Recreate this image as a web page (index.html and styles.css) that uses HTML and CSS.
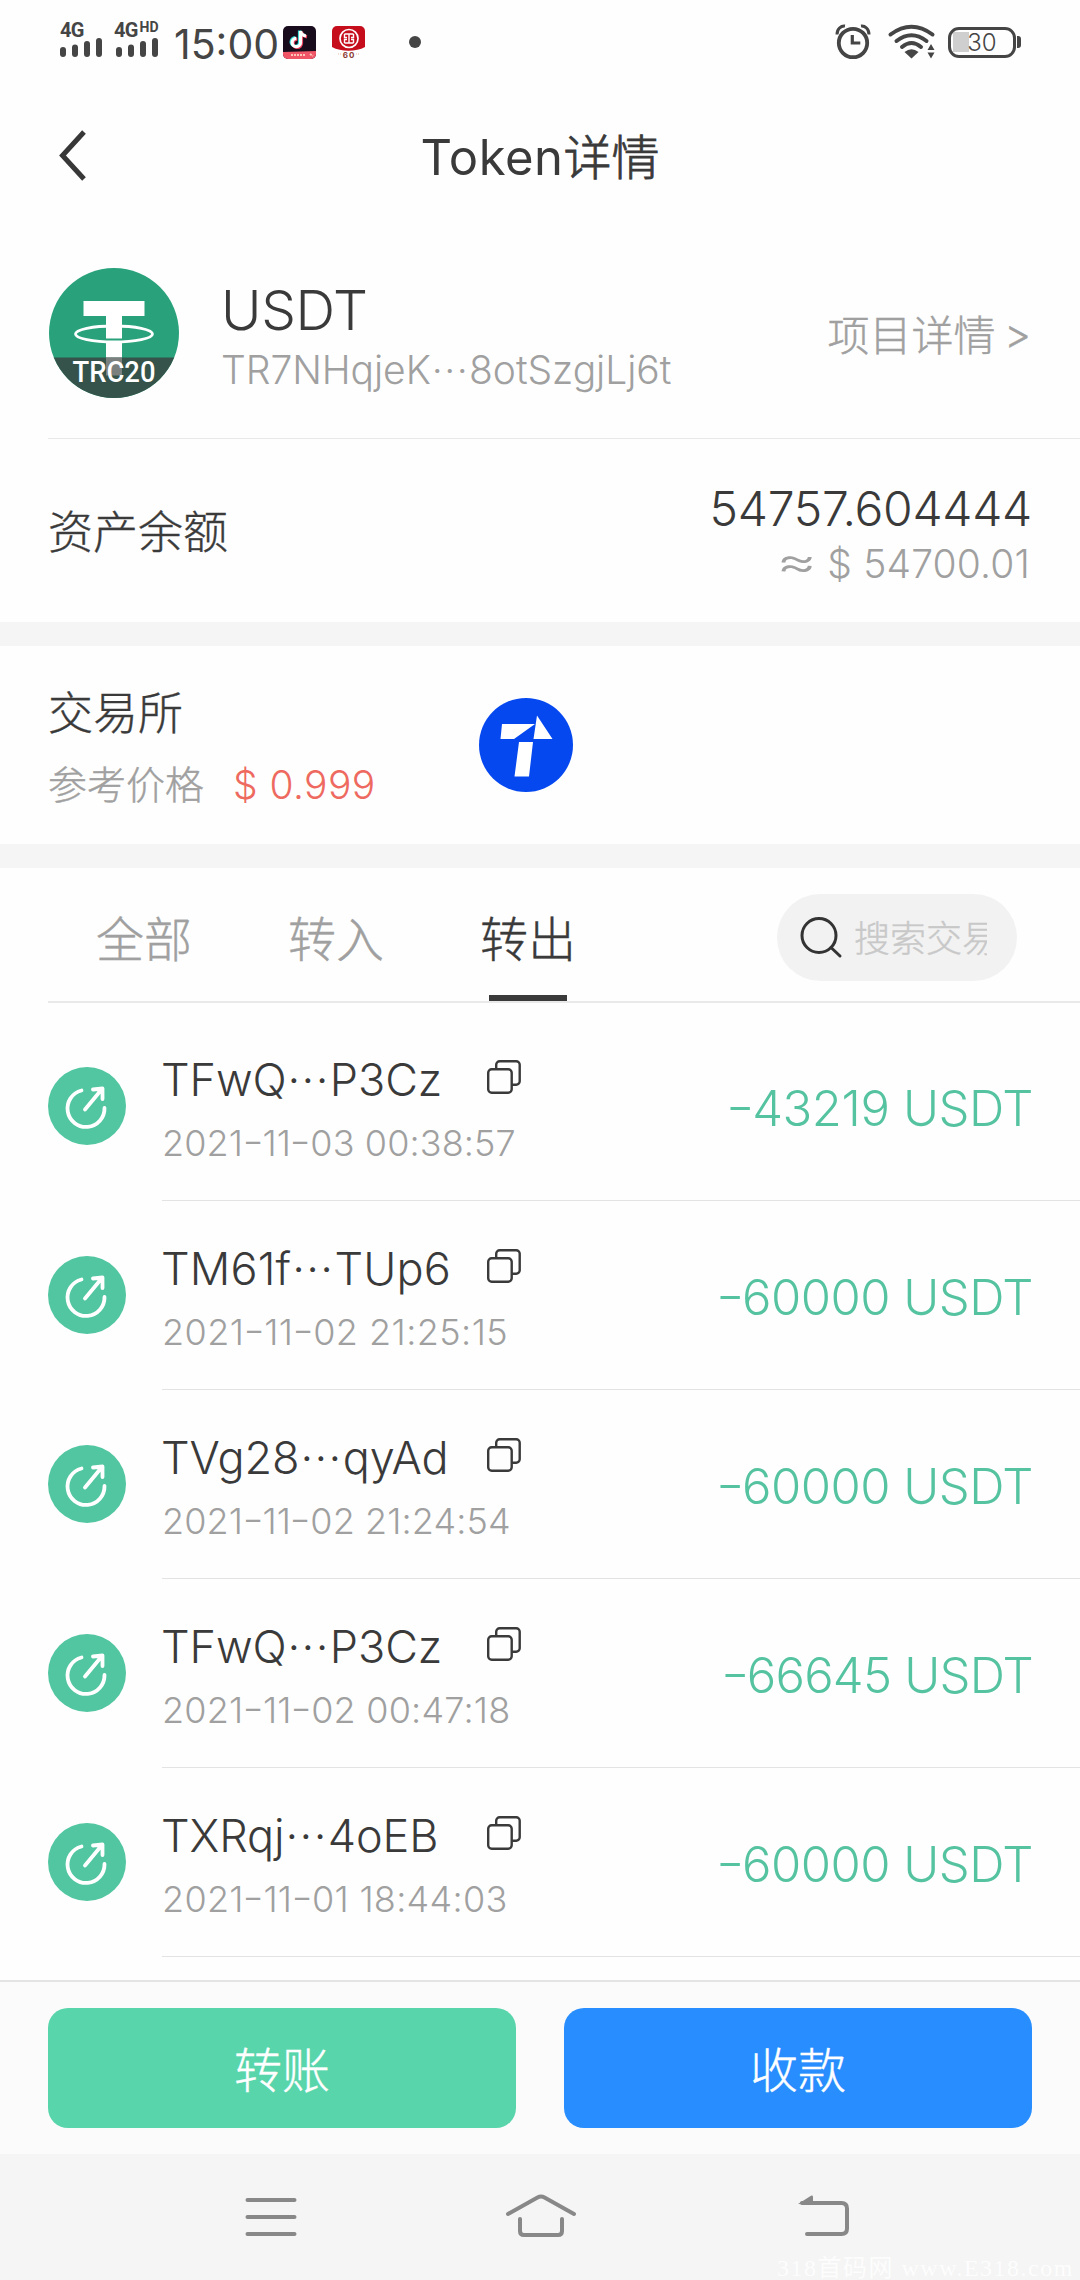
FILE: index.html
```
<!DOCTYPE html>
<html lang="zh-CN">
<head>
<meta charset="utf-8">
<title>Token详情</title>
<link rel="stylesheet" href="styles.css">
</head>
<body>
<svg class="defs" width="0" height="0" aria-hidden="true">
  <symbol id="out" viewBox="0 0 78 78">
    <circle cx="39" cy="39" r="39" fill="#51c6a0"/>
    <g fill="none" stroke="#fff" stroke-width="3.8" stroke-linecap="round" stroke-linejoin="round">
      <path d="M33.500 23.500A18.500 18.500 0 1 0 56.500 41"/>
      <path d="M37 42.500L54 22M45 22.500l9.500-1v10.500"/>
    </g>
  </symbol>
  <symbol id="copy" viewBox="0 0 36 36">
    <g fill="none" stroke="#3a3a3a" stroke-width="2.400">
      <rect x="2.200" y="10.200" width="23.500" height="23.500" rx="3.500"/>
      <path d="M10.200 10V5.700a3.500 3.500 0 0 1 3.500-3.500h16.500a3.500 3.500 0 0 1 3.500 3.500v16.500a3.500 3.500 0 0 1-3.500 3.500h-4.200"/>
    </g>
  </symbol>
</svg>
<div class="screen">
  <header class="status">
    <div class="signal">
      <span class="net">4G</span>
      <svg width="44" height="20" viewBox="0 0 44 20"><path d="M3 12v4M15 9.500v6.500M27 6v10M39 3v13" stroke="#454545" stroke-width="6" stroke-linecap="round"/></svg>
    </div>
    <div class="signal second">
      <span class="net">4G<sup>HD</sup></span>
      <svg width="44" height="20" viewBox="0 0 44 20"><path d="M3 12v4M15 9.500v6.500M27 6v10M39 3v13" stroke="#454545" stroke-width="6" stroke-linecap="round"/></svg>
    </div>
    <span class="clock">15:00</span>
    <svg class="app" width="33" height="33" viewBox="0 0 33 33">
      <rect width="33" height="33" rx="5" fill="#170b1c"/>
      <path d="M0 26l33-1v3a5 5 0 0 1-5 5H5a5 5 0 0 1-5-5z" fill="#ef5467"/>
      <path d="M8 29h15M27 28l3 2" stroke="#ffc6b8" stroke-width="2" stroke-dasharray="2 1"/>
      <g fill="none" stroke-width="3.200">
        <path d="M17.500 5v11.500a4.200 4.200 0 1 1-4.200-4.200M17.500 5c.5 3 2.500 4.500 5.500 5" stroke="#2fd6d6" transform="translate(-1 -.6)"/>
        <path d="M17.500 5v11.500a4.200 4.200 0 1 1-4.200-4.200M17.500 5c.5 3 2.500 4.500 5.500 5" stroke="#f0405f" transform="translate(1 .8)"/>
        <path d="M17.500 5v11.500a4.200 4.200 0 1 1-4.200-4.200M17.500 5c.5 3 2.500 4.500 5.500 5" stroke="#fff"/>
      </g>
    </svg>
    <svg class="app bank" width="33" height="33" viewBox="0 0 33 33">
      <path d="M5 0h23a5 5 0 0 1 5 5v16c-9 5-24 5-33 0V5a5 5 0 0 1 5-5z" fill="#c50d1c"/>
      <circle cx="17" cy="12.500" r="9" fill="none" stroke="#fff" stroke-width="1.700"/>
      <path d="M12.500 8H21.500M12.500 17H21.500M17 8v9M12.500 8v3.500H15M21.500 8v3.500H19M12.500 17v-3.500H15M21.500 17v-3.500H19" fill="none" stroke="#fff" stroke-width="1.400"/>
      <text x="17" y="31.500" text-anchor="middle" class="tiny">60</text>
      <path d="M6 28h4M24 28h4" stroke="#e8b9a0" stroke-width="1" stroke-dasharray="1 1"/>
    </svg>
    <i class="dot"></i>
    <div class="right">
      <svg width="36" height="36" viewBox="0 0 36 36">
        <circle cx="17" cy="19" r="14.200" fill="none" stroke="#454545" stroke-width="3.800"/>
        <path d="M16.300 11v8h8" fill="none" stroke="#454545" stroke-width="3.200"/>
        <path d="M1 10.500C1 5 5 1.500 9 2M33 10.500C33 5 29 1.500 25 2" fill="none" stroke="#454545" stroke-width="3"/>
      </svg>
      <svg width="48" height="36" viewBox="0 0 48 36">
        <g fill="none" stroke="#454545" stroke-width="4" stroke-linecap="round"><path d="M2.500 10.500Q23.500-5 44.500 10.500"/><path d="M8.500 17Q23.500 5.500 38.500 17"/><path d="M14 23Q23.500 15 33 23"/></g>
        <path d="M16.500 28Q23.500 22.500 30.500 28L23.500 34.500z" fill="#454545"/>
        <path d="M39.500 26l3.500-6 3.500 6zM39.500 28.500l3.500 6 3.500-6z" fill="#454545"/>
      </svg>
      <div class="battery"><span>30</span></div>
    </div>
  </header>

  <nav class="titlebar">
    <svg width="34" height="54" viewBox="0 0 34 54"><path d="M30 3L8.500 26.500L30 50" fill="none" stroke="#383838" stroke-width="5"/></svg>
    <h1>Token<span>详情</span></h1>
  </nav>

  <section class="token">
    <svg class="coin" width="132" height="132" viewBox="0 0 132 132">
      <clipPath id="round"><circle cx="66" cy="66" r="65"/></clipPath>
      <g clip-path="url(#round)">
        <rect width="132" height="132" fill="#29a27b"/>
        <path d="M35.500 34H96.500V49H74V109H58V49H35.500z" fill="#fff"/>
        <path d="M58 71.500h16v4H58z" fill="#29a27b"/>
        <ellipse cx="66" cy="67" rx="38.500" ry="8" fill="none" stroke="#fff" stroke-width="2.800"/>
        <path d="M58 57h16v14H58z" fill="#fff"/>
        <rect y="90.500" width="132" height="42" fill="#35534a"/>
        <path d="M58 90.500h16v18H58z" fill="#7b817f"/>
      </g>
      <text x="66" y="115" text-anchor="middle" textLength="83" lengthAdjust="spacingAndGlyphs" class="chain">TRC20</text>
    </svg>
    <div class="names">
      <div class="symbol">USDT</div>
      <div class="addr">TR7NHqjeK<b>···</b>8otSzgjLj6t</div>
    </div>
    <div class="detail">项目详情 <span>&gt;</span></div>
  </section>

  <section class="balance">
    <div class="label">资产余额</div>
    <div class="values">
      <div class="amount">54757.604444</div>
      <div class="fiat"><i>≈</i> $ 54700.01</div>
    </div>
  </section>

  <section class="exchange">
    <div class="price">
      <div class="label">交易所</div>
      <div class="ref"><span>参考价格</span><em>$ 0.999</em></div>
    </div>
    <svg width="94" height="94" viewBox="0 0 94 94">
      <circle cx="47" cy="47" r="47" fill="#0548f0"/>
      <path d="M23 26H56L35 41H21.500zM58 17.500L73.500 41H54.500zM40 44H54L50 78.500H35.500z" fill="#fff"/>
    </svg>
  </section>

  <section class="tabs">
    <div class="tab">全部</div>
    <div class="tab">转入</div>
    <div class="tab active">转出</div>
    <div class="search">
      <svg width="42" height="42" viewBox="0 0 42 42"><g fill="none" stroke="#333" stroke-width="3" stroke-linecap="round"><circle cx="18" cy="18.500" r="17"/><path d="M30 30.500l9 8.500"/></g></svg>
      <span>搜索交易</span>
    </div>
  </section>

  <main class="list">
    <article class="row r1"><svg class="ic"><use href="#out"/></svg><div class="body"><div class="who"><span class="hash">TFwQ<b>···</b>P3Cz</span><svg class="cp"><use href="#copy"/></svg><time>2021<i>-</i>11<i>-</i>03 00:38:57</time></div><div class="sum"><i>-</i>43219 USDT</div></div></article>
    <article class="row r2"><svg class="ic"><use href="#out"/></svg><div class="body"><div class="who"><span class="hash">TM61f<b>···</b>TUp6</span><svg class="cp"><use href="#copy"/></svg><time>2021<i>-</i>11<i>-</i>02 21:25:15</time></div><div class="sum"><i>-</i>60000 USDT</div></div></article>
    <article class="row r3"><svg class="ic"><use href="#out"/></svg><div class="body"><div class="who"><span class="hash">TVg28<b>···</b>qyAd</span><svg class="cp"><use href="#copy"/></svg><time>2021<i>-</i>11<i>-</i>02 21:24:54</time></div><div class="sum"><i>-</i>60000 USDT</div></div></article>
    <article class="row r4"><svg class="ic"><use href="#out"/></svg><div class="body"><div class="who"><span class="hash">TFwQ<b>···</b>P3Cz</span><svg class="cp"><use href="#copy"/></svg><time>2021<i>-</i>11<i>-</i>02 00:47:18</time></div><div class="sum"><i>-</i>66645 USDT</div></div></article>
    <article class="row r5"><svg class="ic"><use href="#out"/></svg><div class="body"><div class="who"><span class="hash">TXRqj<b>···</b>4oEB</span><svg class="cp"><use href="#copy"/></svg><time>2021<i>-</i>11<i>-</i>01 18:44:03</time></div><div class="sum"><i>-</i>60000 USDT</div></div></article>
  </main>

  <footer class="actions">
    <button class="send">转账</button>
    <button class="receive">收款</button>
  </footer>

  <div class="sysnav">
    <svg width="50" height="44" viewBox="0 0 50 44"><path d="M1.500 5h47M1.500 22h47M1.500 39h47" stroke="#888" stroke-width="4" stroke-linecap="round"/></svg>
    <svg width="72" height="44" viewBox="0 0 72 44"><g fill="none" stroke="#888" stroke-width="4" stroke-linecap="round" stroke-linejoin="round"><path d="M3 19L32.500 2.500Q36 .5 39.500 2.500L69 19"/><path d="M15 24V36Q15 40 19 40H53Q57 40 57 36V24"/></g></svg>
    <svg width="52" height="44" viewBox="0 0 52 44"><path d="M9 39H43.500Q49 39 49 33.500V13.500Q49 8 43.500 8H4" fill="none" stroke="#888" stroke-width="4" stroke-linecap="round"/><path d="M0 9L13 .7Q15 0 15 2V9.500z" fill="#888"/></svg>
    <div class="mark">318首码网 www.E318.com</div>
  </div>
</div>
</body>
</html>
```
FILE: styles.css
```
* { box-sizing: border-box; }
body { margin: 0; background: #fefefe; }
.defs { display: block; height: 0; }
.screen {
  width: 1080px; height: 2280px; overflow: hidden;
  display: flex; flex-direction: column;
  font-family: Inter, "Noto Sans CJK SC", sans-serif;
  font-weight: 300; color: #3a3a3a; background: #fefefe;
}
svg { display: block; flex: none; overflow: visible; }
h1, em, b, i, time { font-style: normal; font-weight: inherit; margin: 0; }

.status { height: 90px; flex: none; display: flex; padding: 0 64px 0 60px; color: #454545; }
.signal { width: 44px; padding-top: 20px; }
.signal.second { margin-left: 12px; }
.net { display: block; height: 18px; font: 700 20px/20px Roboto, sans-serif; letter-spacing: -.8px; white-space: nowrap; }
.second .net { margin-left: -2px; }
.net sup { font-size: 14px; line-height: 1; vertical-align: 5px; letter-spacing: 0; margin-left: 2px; }
.clock { width: 104px; flex: none; margin-left: 14px; height: 88px; font-size: 41px; line-height: 89px; font-weight: 370; letter-spacing: 0; white-space: nowrap; }
.app { margin: 26px 0 0 5px; }
.app.bank { margin-left: 16px; }
.dot { width: 12px; height: 12px; border-radius: 50%; background: #454545; margin: 36px 0 0 44px; }
.tiny { font: 700 8px Inter, sans-serif; fill: #8c3a33; letter-spacing: 1px; }
.right { margin-left: auto; display: flex; gap: 16px; padding-top: 24px; }
.battery { position: relative; width: 68px; height: 31px; margin: 3px 0 0 -4px; border: 3.5px solid #454545; border-radius: 11px; background: linear-gradient(#cfcfcf, #cfcfcf) 2px 2px / 16px 20px no-repeat; font-size: 24px; line-height: 25px; text-align: center; font-weight: 350; }
.battery::after { content: ""; position: absolute; right: -8px; top: 6px; width: 4px; height: 12px; border-radius: 0 3px 3px 0; background: #454545; }

.titlebar { height: 136px; flex: none; display: grid; grid-template-columns: 1fr auto 1fr; padding: 0 51px; }
.titlebar svg { margin: 39px 0 0 3px; }
.titlebar h1 { font-size: 49px; line-height: 60px; height: 60px; margin-top: 38px; font-weight: 380; letter-spacing: .5px; white-space: nowrap; }
.titlebar h1 span { font-size: 48px; font-weight: 300; letter-spacing: 0; -webkit-text-stroke: .8px currentColor; }

.token { height: 213px; flex: none; margin-left: 48px; padding: 41px 49px 0 0; border-bottom: 1px solid #e8e8e8; display: flex; }
.chain { font: 500 30px Roboto, sans-serif; fill: #fff; }
.names { margin-left: 40px; white-space: nowrap; }
.symbol { font-size: 55px; line-height: 60px; height: 60px; margin: 13px 0 0 1px; letter-spacing: -.3px; }
.addr { font-size: 39px; line-height: 50px; height: 50px; margin: 5px 0 0 1px; color: #a0a0a0; letter-spacing: -.05px; }
.detail { margin: 38px 0 0 auto; height: 60px; line-height: 62px; font-size: 42px; color: #a0a0a0; white-space: nowrap; }
.detail span { font-size: 41px; margin-left: -3px; display: inline-block; line-height: 40px; transform: translateY(-2px); }
.addr b, .hash b { letter-spacing: 1.4px; margin-left: 1px; }

.label, .tab, .detail, .ref span, .search span, .actions button { -webkit-text-stroke: .4px currentColor; }

.balance { height: 183px; flex: none; display: flex; justify-content: space-between; padding: 0 48px; }
.label { font-size: 45px; line-height: 60px; height: 60px; white-space: nowrap; }
.balance .label { margin-top: 64px; }
.values { text-align: right; padding-top: 40px; white-space: nowrap; }
.amount { font-size: 48px; line-height: 60px; height: 60px; letter-spacing: -.3px; }
.fiat { font-size: 39px; line-height: 50px; height: 50px; color: #a0a0a0; padding-right: 2px; letter-spacing: .15px; }
.fiat i { display: inline-block; line-height: 40px; transform: translateY(-3px) scale(1.6, 1.15); margin-right: 7px; }

.exchange { height: 246px; flex: none; border-top: 24px solid #f5f5f5; border-bottom: 24px solid #f5f5f5; padding-left: 48px; display: flex; }
.price { width: 431px; padding-top: 38px; }
.ref { display: flex; gap: 29px; margin-top: 15px; height: 52px; line-height: 52px; font-size: 39px; color: #a0a0a0; white-space: nowrap; }
.ref em { color: #ee6a60; letter-spacing: .4px; }
.exchange svg { margin-top: 52px; }

.tabs { height: 135px; flex: none; margin-left: 48px; border-bottom: 2px solid #e9e9e9; display: flex; }
.tab { width: 96px; margin-left: 48px; margin-right: 48px; padding-top: 42px; font-size: 48px; line-height: 60px; color: #a0a0a0; white-space: nowrap; }
.tab.active { color: #3a3a3a; display: flex; flex-direction: column; justify-content: space-between; height: 133px; }
.tab.active::after { content: ""; height: 6px; width: 78px; margin-left: 9px; background: #3a3a3a; }
.search { width: 240px; height: 87px; margin: 26px 63px 0 auto; border-radius: 44px; background: #f2f2f2; display: flex; padding: 23px 30px 0 24px; }
.search span { margin: -2px 0 0 11px; width: 133px; height: 48px; overflow: hidden; white-space: nowrap; font-size: 36px; line-height: 48px; color: #c8c8c8; }

.list { height: 977px; flex: none; padding-top: 9px; overflow: hidden; }
.row { height: 189px; display: flex; padding-left: 48px; }
.ic { width: 78px; height: 78px; margin-top: 55px; }
.body { flex: 1; margin-left: 36px; padding-right: 47px; border-bottom: 1px solid #e3e3e3; display: flex; justify-content: space-between; }
.who { display: grid; grid-template-columns: 324px 36px; grid-template-rows: 60px 50px; row-gap: 8px; padding-top: 38px; height: 170px; white-space: nowrap; }
.hash { font-size: 45px; line-height: 60px; margin-left: -1px; letter-spacing: -.1px; }
.cp { width: 36px; height: 36px; margin-top: 9px; }
time { font-size: 36px; line-height: 50px; color: #a0a0a0; letter-spacing: .1px; }
.sum { font-size: 49px; line-height: 60px; height: 60px; margin-top: 67px; color: #55c3a0; white-space: nowrap; letter-spacing: -.5px; }
/* hyphens sit at digit height and run wider than the default glyph */
time i, .sum i { display: inline-block; font-feature-settings: "case"; transform: scaleX(1.3); margin: 0 1.500px; }
.sum i { margin: 0 1px 0 0; }
.r1 .sum { letter-spacing: -.4px; }
.r4 .sum { letter-spacing: -.75px; }
.r2 .hash { letter-spacing: .15px; }
.r2 time { letter-spacing: .45px; }
.r4 time { letter-spacing: .2px; }
.r5 time { letter-spacing: .3px; }

.actions { height: 174px; flex: none; border-top: 2px solid #e4e4e4; background: #fbfbfb; padding: 26px 48px 0; display: flex; gap: 48px; }
.actions button { flex: 1; height: 120px; border: 0; border-radius: 20px; padding: 5px 0 0; color: #fff; font: inherit; font-size: 48px; line-height: 115px; }
.send { background: #59d5ab; }
.receive { background: #288eff; }

.sysnav { position: relative; flex: 1; background: #f5f5f5; display: flex; padding: 41px 0 0 246px; }
.sysnav svg:nth-child(2) { margin-left: 209px; }
.sysnav svg:nth-child(3) { margin-left: 221px; }
.mark { position: absolute; left: 777px; bottom: -4px; width: 303px; white-space: nowrap; font: 24px/32px "Liberation Serif", "Noto Sans CJK SC", serif; color: #fff; letter-spacing: 1.500px; opacity: .85; }
```
